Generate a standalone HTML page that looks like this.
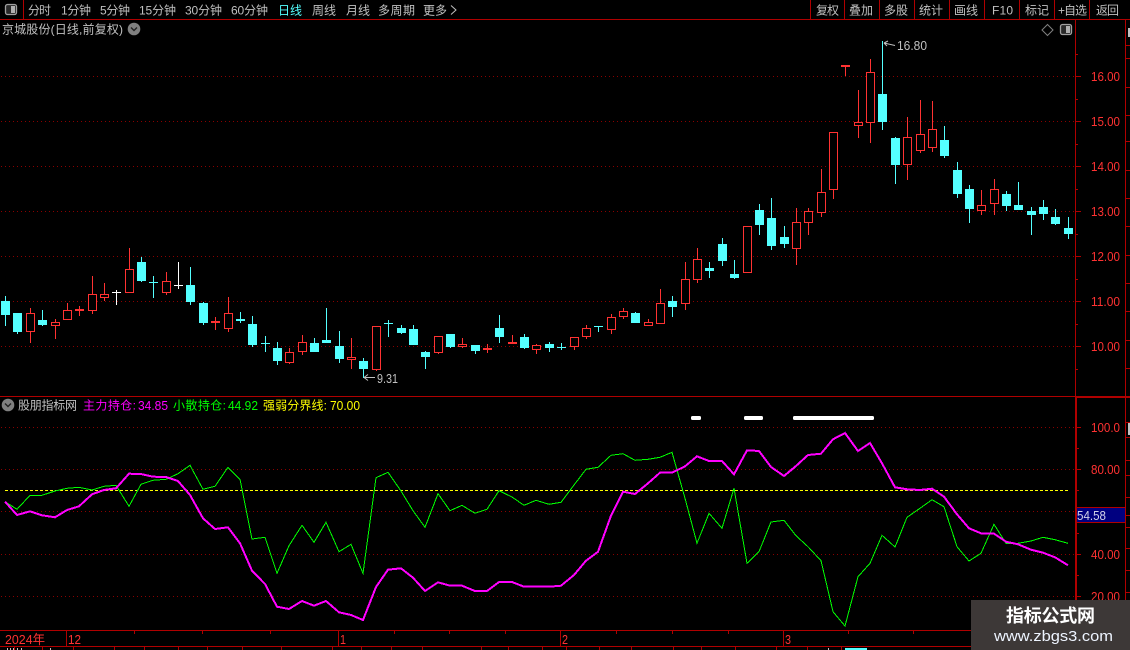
<!DOCTYPE html>
<html lang="zh">
<head>
<meta charset="utf-8">
<title>京城股份</title>
<style>
html,body{margin:0;padding:0;background:#000;width:1130px;height:650px;overflow:hidden}
svg{display:block;position:absolute;left:0;top:0}
text{font-family:"Liberation Sans","WenQuanYi Zen Hei","Noto Sans CJK SC",sans-serif;font-size:12px}
.n{font-size:13px}
.c{shape-rendering:crispEdges}
</style>
</head>
<body>
<svg width="1130" height="650" viewBox="0 0 1130 650" xmlns="http://www.w3.org/2000/svg">
<rect width="1130" height="650" fill="#000"/>

<!-- grid -->
<g class="c" stroke="#8a0000" stroke-width="1" stroke-dasharray="1 3" fill="none">
<path d="M1 76.5H1075M1 121.5H1075M1 166.5H1075M1 211.5H1075M1 256.5H1075M1 301.5H1075M1 346.5H1075"/>
<path d="M1 427.5H1075M1 469.5H1075M1 511.5H1075M1 554.5H1075M1 596.5H1075"/>
</g>

<!-- frame lines -->
<g class="c" stroke="#b00000" stroke-width="1" fill="none">
<path d="M0 19.5H1130M0 396.5H1130M0 630.5H1130M0 646.5H1130"/>
<path d="M23.5 0V19M810.5 0V19M844.5 0V19M879.5 0V19M914.5 0V19M949.5 0V19M984.5 0V19M1019.5 0V19M1054.5 0V19M1089.5 0V19"/>
<path d="M1075.5 19V396M1125.5 19V630"/>
<path d="M1075 397.5H1130"/>
<path d="M1075.5 397V630M1076.5 397V630"/>
<path d="M66.5 631V646M338.5 631V646M560.5 631V646M783.5 631V646"/>
<!-- main axis ticks -->
<path d="M1075 76.5H1081M1075 121.5H1081M1075 166.5H1081M1075 211.5H1081M1075 256.5H1081M1075 301.5H1081M1075 346.5H1081"/>
<path d="M1075 99.5H1078M1075 144.5H1078M1075 189.5H1078M1075 234.5H1078M1075 279.5H1078M1075 324.5H1078M1075 369.5H1078M1075 54.5H1078"/>
<!-- lower axis ticks -->
<path d="M1077 427.5H1081M1077 469.5H1081M1077 554.5H1081M1077 596.5H1081"/>
<path d="M1077 448.5H1079M1077 490.5H1079M1077 533.5H1079M1077 575.5H1079M1077 617.5H1079"/>
<!-- far right ticks -->
<path d="M1126 45.5H1130M1126 58.5H1130M1126 87.5H1130M1126 115.5H1130M1126 141.5H1130M1126 170.5H1130M1126 198.5H1130M1126 226.5H1130M1126 255.5H1130M1126 283.5H1130M1126 311.5H1130M1126 340.5H1130M1126 368.5H1130"/>
<path d="M1126 422.5H1130M1126 437.5H1130M1126 460.5H1130M1126 475.5H1130M1126 497.5H1130M1126 515.5H1130M1126 527.5H1130M1126 548.5H1130M1126 570.5H1130M1126 592.5H1130"/>
<!-- time ticks -->
<path d="M134.5 631V634M202.5 631V634M270.5 631V634M394.5 631V634M449.5 631V634M505.5 631V634M616.5 631V634M672.5 631V634M728.5 631V634M848.5 631V634M913.5 631V634"/>
<path d="M14.5 647V650M42.5 647V650M73.5 647V650M114.5 647V650M144.5 647V650M178.5 647V650M207.5 647V650M242.5 647V650M281.5 647V650M332.5 647V650M361.5 647V650M391.5 647V650M422.5 647V650M481.5 647V650M508.5 647V650M542.5 647V650M566.5 647V650M599.5 647V650M631.5 647V650M673.5 647V650M701.5 647V650M735.5 647V650M776.5 647V650M807.5 647V650M841.5 647V650"/>
</g>
<rect class="c" x="845" y="648" width="22" height="2" fill="#54ffff"/>
<path class="c" d="M7.5 648V650M10.5 648V650M13.5 648V650M17.5 648V650M21.5 648V650M50.5 648V650M828.5 648V650" stroke="#c0c0c0" fill="none"/>
<rect class="c" x="1128" y="423" width="2" height="12" fill="#c0c0c0"/>
<rect class="c" x="1128" y="28" width="2" height="9" fill="#c0c0c0"/>

<!-- cyan wicks + bodies -->
<g class="c">
<path fill="none" stroke="#54ffff" stroke-width="1" d="M5.5 296V326M17.5 313V334M42.5 310V326M141.5 257V282M190.5 267V305M203.5 302V325M252.5 316V347M277.5 342V365M314.5 338V352M326.5 308V343M339.5 331V363M363.5 358V378M401.5 325V334M413.5 325V345M425.5 351V369M450.5 334V348M475.5 345V354M499.5 315V343M524.5 334V349M549.5 342V352M635.5 312V323M672.5 296V317M709.5 262V278M722.5 238V266M734.5 260V279M759.5 204V235M771.5 198V250M784.5 226V248M882.5 41V130M895.5 137V184M944.5 126V158M957.5 162V198M969.5 185V223M1006.5 191V211M1018.5 182V210M1031.5 207V235M1043.5 200V220M1055.5 209V225M1068.5 217V239M153.5 276V298M240.5 312V323M265.5 336V352M388.5 320V337M561.5 343V350M598.5 326V332"/>
<path fill="#54ffff" d="M1 301h9v14h-9zM13 313h9v19h-9zM38 320h9v5h-9zM137 262h9v19h-9zM186 285h9v17h-9zM199 303h9v20h-9zM248 324h9v21h-9zM273 348h9v13h-9zM310 343h9v9h-9zM322 340h9v3h-9zM335 346h9v13h-9zM359 361h9v8h-9zM397 328h9v5h-9zM409 329h9v16h-9zM421 352h9v5h-9zM446 334h9v13h-9zM471 345h9v6h-9zM495 328h9v9h-9zM520 337h9v11h-9zM545 344h9v4h-9zM631 313h9v10h-9zM668 301h9v6h-9zM705 268h9v3h-9zM718 244h9v17h-9zM730 274h9v4h-9zM755 210h9v15h-9zM767 218h9v28h-9zM780 237h9v7h-9zM878 94h9v28h-9zM891 138h9v27h-9zM940 140h9v16h-9zM953 170h9v24h-9zM965 189h9v20h-9zM1002 194h9v12h-9zM1014 205h9v5h-9zM1027 211h9v4h-9zM1039 207h9v7h-9zM1051 217h9v7h-9zM1064 228h9v6h-9zM236 319h9v2h-9zM149 282h9v1h-9zM261 343h9v1h-9zM384 323h9v1h-9zM557 347h9v1h-9zM594 326h9v1h-9z"/>

<!-- red wicks -->
<path fill="none" stroke="#ff3232" stroke-width="1" d="M30.5 308V343M55.5 319V339M67.5 303V320M92.5 276V314M104.5 283V301M129.5 248V293M166.5 272V295M228.5 297V332M289.5 348V364M302.5 335V355M351.5 338V369M376.5 326V371M438.5 336V354M462.5 338V348M536.5 344V354M574.5 337V350M586.5 325V339M611.5 314V334M623.5 308V319M648.5 319V326M660.5 289V324M685.5 262V310M697.5 248V283M747.5 226V273M796.5 208V265M808.5 208V235M821.5 169V217M833.5 132V199M858.5 90V138M870.5 59V143M907.5 117V180M920.5 100V153M932.5 101V152M981.5 190V215M994.5 179V215M79.5 306V316M215.5 317V330M487.5 344V353M512.5 335V344M845.5 66V76"/>
<!-- red hollow bodies -->
<path fill="#000" stroke="#ff3232" stroke-width="1" d="M26.5 313.5h8V331.5h-8zM51.5 322.5h8V325.5h-8zM63.5 310.5h8V319.5h-8zM88.5 294.5h8V310.5h-8zM100.5 294.5h8V297.5h-8zM125.5 269.5h8V292.5h-8zM162.5 281.5h8V292.5h-8zM224.5 313.5h8V328.5h-8zM285.5 352.5h8V362.5h-8zM298.5 342.5h8V351.5h-8zM347.5 357.5h8V359.5h-8zM372.5 326.5h8V369.5h-8zM434.5 336.5h8V352.5h-8zM458.5 344.5h8V346.5h-8zM532.5 345.5h8V349.5h-8zM570.5 337.5h8V346.5h-8zM582.5 328.5h8V336.5h-8zM607.5 317.5h8V329.5h-8zM619.5 311.5h8V316.5h-8zM644.5 322.5h8V325.5h-8zM656.5 303.5h8V323.5h-8zM681.5 279.5h8V303.5h-8zM693.5 259.5h8V279.5h-8zM743.5 226.5h8V272.5h-8zM792.5 222.5h8V248.5h-8zM804.5 211.5h8V222.5h-8zM817.5 192.5h8V212.5h-8zM829.5 132.5h8V189.5h-8zM854.5 122.5h8V125.5h-8zM866.5 72.5h8V122.5h-8zM903.5 137.5h8V164.5h-8zM916.5 134.5h8V150.5h-8zM928.5 129.5h8V147.5h-8zM977.5 205.5h8V210.5h-8zM990.5 189.5h8V203.5h-8z"/>
<path fill="#ff3232" d="M75 309h9v2h-9zM211 321h9v2h-9zM483 348h9v2h-9zM508 342h9v2h-9zM841 65h9v2h-9z"/>

<!-- white doji -->
<path fill="none" stroke="#fff" stroke-width="1" d="M116.5 290V305M178.5 262V289"/>
<path fill="#fff" d="M112 292h9v1h-9zM174 285h9v1h-9z"/>
</g>

<!-- high/low markers -->
<g fill="none" stroke="#c0c0c0" stroke-width="1">
<path d="M884 43L895 45.5M884 43l4-2M884 43l3 3"/>
<path d="M364 377.5H375M364 377.5l4-3M364 377.5l4 3"/>
</g>
<text class="n" x="897" y="50" fill="#c0c0c0" textLength="30" lengthAdjust="spacingAndGlyphs">16.80</text>
<text class="n" x="377" y="383" fill="#c0c0c0" textLength="21" lengthAdjust="spacingAndGlyphs">9.31</text>

<!-- top bar -->
<g fill="#c0c0c0">
<text x="28" y="14.5" textLength="23">分时</text>
<text x="61" y="14.5" textLength="30">1分钟</text>
<text x="100" y="14.5" textLength="30">5分钟</text>
<text x="139" y="14.5" textLength="37">15分钟</text>
<text x="185" y="14.5" textLength="37">30分钟</text>
<text x="231" y="14.5" textLength="37">60分钟</text>
<text x="278" y="14.5" textLength="24" fill="#54ffff">日线</text>
<text x="312" y="14.5" textLength="24">周线</text>
<text x="346" y="14.5" textLength="24">月线</text>
<text x="378" y="14.5" textLength="37">多周期</text>
<text x="423" y="14.5" textLength="24">更多</text>
<text x="816" y="14.5" textLength="23">复权</text>
<text x="849" y="14.5" textLength="24">叠加</text>
<text x="884" y="14.5" textLength="24">多股</text>
<text x="919" y="14.5" textLength="24">统计</text>
<text x="954" y="14.5" textLength="24">画线</text>
<text x="992" y="14.5" textLength="21">F10</text>
<text x="1025" y="14.5" textLength="24">标记</text>
<text x="1058" y="14.5" textLength="29">+自选</text>
<text x="1096" y="14.5" textLength="23">返回</text>
<text x="2" y="33.5" textLength="121">京城股份(日线,前复权)</text>
<text x="18" y="409.5" textLength="59">股朋指标网</text>
</g>
<path d="M451 5.5l5 4.5l-5 4.5" fill="none" stroke="#c0c0c0" stroke-width="1"/>

<!-- icons -->
<rect x="5.5" y="4.5" width="11" height="10" rx="2" fill="#2a2a2a" stroke="#a0a0a0" stroke-width="1.3"/>
<rect x="11" y="6" width="4" height="7" fill="#b0b0b0" class="c"/>
<rect x="1060.5" y="24.5" width="11" height="10" rx="2" fill="#2a2a2a" stroke="#a0a0a0" stroke-width="1.3"/>
<rect x="1066" y="26" width="4" height="7" fill="#b0b0b0" class="c"/>
<path d="M1047.5 24.5l5.5 5.5l-5.5 5.5l-5.5-5.5z" fill="none" stroke="#808080"/>
<circle cx="134" cy="29" r="6.3" fill="#808080"/>
<path d="M131 27.5l3 3l3-3" fill="none" stroke="#222" stroke-width="1.4"/>
<circle cx="8" cy="405" r="6.3" fill="#808080"/>
<path d="M5 403.5l3 3l3-3" fill="none" stroke="#222" stroke-width="1.4"/>

<!-- axis labels -->
<g fill="#ff3232">
<text class="n" x="1091" y="81" textLength="29" lengthAdjust="spacingAndGlyphs">16.00</text>
<text class="n" x="1091" y="126" textLength="29" lengthAdjust="spacingAndGlyphs">15.00</text>
<text class="n" x="1091" y="171" textLength="29" lengthAdjust="spacingAndGlyphs">14.00</text>
<text class="n" x="1091" y="216" textLength="29" lengthAdjust="spacingAndGlyphs">13.00</text>
<text class="n" x="1091" y="261" textLength="29" lengthAdjust="spacingAndGlyphs">12.00</text>
<text class="n" x="1091" y="306" textLength="29" lengthAdjust="spacingAndGlyphs">11.00</text>
<text class="n" x="1091" y="351" textLength="29" lengthAdjust="spacingAndGlyphs">10.00</text>
<text class="n" x="1091" y="432" textLength="29" lengthAdjust="spacingAndGlyphs">100.0</text>
<text class="n" x="1091" y="474" textLength="29" lengthAdjust="spacingAndGlyphs">80.00</text>
<text class="n" x="1091" y="559" textLength="29" lengthAdjust="spacingAndGlyphs">40.00</text>
<text class="n" x="1091" y="601" textLength="29" lengthAdjust="spacingAndGlyphs">20.00</text>
<text class="n" x="5" y="644" textLength="40" lengthAdjust="spacingAndGlyphs">2024年</text>
<text class="n" x="68" y="644" textLength="13" lengthAdjust="spacingAndGlyphs">12</text>
<text class="n" x="340" y="644" textLength="6" lengthAdjust="spacingAndGlyphs">1</text>
<text class="n" x="562" y="644" textLength="6" lengthAdjust="spacingAndGlyphs">2</text>
<text class="n" x="785" y="644" textLength="6" lengthAdjust="spacingAndGlyphs">3</text>
</g>
<rect class="c" x="1077" y="507" width="48" height="16" fill="#000080"/>
<path class="c" d="M1077 507.5H1125M1077 522.5H1125" stroke="#b00000"/>
<text class="n" x="1077" y="520" fill="#d0d0e8" textLength="29" lengthAdjust="spacingAndGlyphs">54.58</text>

<!-- indicator legend -->
<text x="83" y="409.5" fill="#ff00ff" textLength="53">主力持仓:</text>
<text class="n" x="138" y="410" fill="#ff00ff" textLength="30" lengthAdjust="spacingAndGlyphs">34.85</text>
<text x="173" y="409.5" fill="#00ff00" textLength="53">小散持仓:</text>
<text class="n" x="228" y="410" fill="#00ff00" textLength="30" lengthAdjust="spacingAndGlyphs">44.92</text>
<text x="263" y="409.5" fill="#ffff00" textLength="64">强弱分界线:</text>
<text class="n" x="330" y="410" fill="#ffff00" textLength="30" lengthAdjust="spacingAndGlyphs">70.00</text>

<!-- signal bars -->
<g fill="#fff">
<rect x="691" y="416" width="10" height="4" rx="1.5"/>
<rect x="744" y="416" width="19" height="4" rx="1.5"/>
<rect x="793" y="416" width="81" height="4" rx="1.5"/>
</g>

<!-- indicator lines -->
<path class="c" d="M5 490.5H1068" stroke="#ffff00" stroke-width="1" stroke-dasharray="3 2" fill="none"/>
<polyline class="c" fill="none" stroke="#00ff00" stroke-width="1" points="5,501.7 17,509.3 30,495.3 42,495.3 55,491 67,488.3 79,487.3 92,490 104,486.3 116,485.3 129,506.3 141,484.3 153,480.3 166,479.3 178,473.7 190,465.3 203,489.3 215,486.3 228,467.3 240,479.3 252,539 265,537.3 277,573.3 289,545.7 302,525.3 314,542.3 326,522.3 339,551.7 351,544.3 363,573.3 376,477.7 388,472.3 401,491 413,510.7 425,527.3 438,493.7 450,510.7 462,505.3 475,513.3 487,509.3 499,490.7 512,497 524,505.3 536,500.3 549,504.3 561,502.3 574,485 586,469.3 598,467.3 611,455.3 623,453.7 635,460.3 648,459.3 660,457.3 672,452.3 685,498.3 697,543.3 709,513.3 722,528.3 734,488.3 747,563.3 759,551.7 771,522 784,520.3 796,535.7 808,546.7 821,560.7 833,611.7 845,626 858,576.7 870,563.3 882,535.3 895,547 907,517.3 920,508.3 932,499.7 944,506.7 957,546.7 969,561 981,553.3 994,524.3 1006,543.3 1018,543.3 1031,541 1043,537.3 1055,539.7 1068,543.3"/>
<polyline class="c" fill="none" stroke="#ff00ff" stroke-width="2" points="5,501.7 17,515 30,511.3 42,515.3 55,517.3 67,510 79,506.3 92,494.3 104,490 116,488.3 129,473.7 141,474 153,476.7 166,477 178,481 190,495 203,518.3 215,529 228,527.3 240,543.3 252,570.7 265,584 277,606.7 289,609 302,601 314,605.7 326,601 339,612.3 351,615 363,620 376,587 388,569.7 401,568.3 413,577.7 425,591 438,582.3 450,585.7 462,585.7 475,591 487,591 499,582 512,582 524,586.7 536,586.7 549,586.7 561,585.7 574,575 586,560.7 598,551.7 611,515.7 623,491.7 635,494 648,483.3 660,472.7 672,472.7 685,466.3 697,456.3 709,461 722,461 734,474.3 747,450.3 759,451 771,467 784,476 796,466 808,455 821,453.7 833,439.3 845,433 858,451 870,443 882,463.3 895,487.3 907,489.3 920,490 932,488.7 944,496.7 957,514.3 969,528.3 981,533.3 994,533.7 1006,541.7 1018,544.3 1031,549.7 1043,552.7 1055,557.3 1068,565.3"/>

<!-- watermark -->
<rect x="971" y="600" width="159" height="50" fill="#3d3837"/>
<text x="1006" y="622" fill="#fff" font-weight="700" style="font-size:18px" textLength="89">指标公式网</text>
<text x="994" y="641" fill="#eef4ff" style="font-size:15px" textLength="119" lengthAdjust="spacingAndGlyphs">www.zbgs3.com</text>
</svg>
</body>
</html>
